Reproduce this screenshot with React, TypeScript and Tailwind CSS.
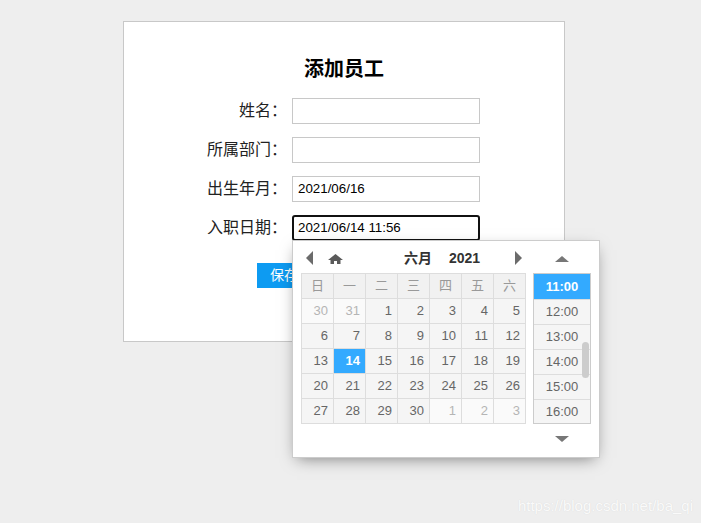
import React from "react";

const weekDays = ["日", "一", "二", "三", "四", "五", "六"];

const weeks: { d: number; other?: boolean }[][] = [
  [{ d: 30, other: true }, { d: 31, other: true }, { d: 1 }, { d: 2 }, { d: 3 }, { d: 4 }, { d: 5 }],
  [{ d: 6 }, { d: 7 }, { d: 8 }, { d: 9 }, { d: 10 }, { d: 11 }, { d: 12 }],
  [{ d: 13 }, { d: 14 }, { d: 15 }, { d: 16 }, { d: 17 }, { d: 18 }, { d: 19 }],
  [{ d: 20 }, { d: 21 }, { d: 22 }, { d: 23 }, { d: 24 }, { d: 25 }, { d: 26 }],
  [{ d: 27 }, { d: 28 }, { d: 29 }, { d: 30 }, { d: 1, other: true }, { d: 2, other: true }, { d: 3, other: true }],
];

const times = ["11:00", "12:00", "13:00", "14:00", "15:00", "16:00"];

function Field({ label, value, focused, children }: { label: string; value?: string; focused?: boolean; children?: React.ReactNode }) {
  return (
    <div className="flex items-center h-[26px]">
      <div className="w-[157px] text-right text-[16px] text-[#222] pr-[5px] leading-none">{label}</div>
      <div className="relative">
        <div
          className={
            focused
              ? "w-[188px] h-[26px] border-2 border-[#111] rounded-[3px] pl-[4px] flex items-center text-[13.33px] text-black"
              : "w-[188px] h-[26px] border border-[#c8c8c8] pl-[5px] flex items-center text-[13.33px] text-black"
          }
        >
          {value}
        </div>
        {children}
      </div>
    </div>
  );
}

function Picker() {
  return (
    <div className="absolute left-0 top-[25px] z-10 w-[308px] h-[218px] bg-white border border-[#ccc] shadow-[0_5px_15px_-5px_rgba(0,0,0,0.5)] flex pl-[8px]">
      <div className="w-[225px]">
        <div className="h-[32px] flex items-center relative pt-[2px]">
          <svg width="8" height="14" viewBox="0 0 8 14" className="ml-[5px]">
            <path d="M7 0 L0 7 L7 14 Z" fill="#6b6b6b" />
          </svg>
          <svg width="15" height="10" viewBox="0 0 15 10" className="ml-[14px] mt-[2px]">
            <path d="M7.5 0 L15 6 L12.5 6 L12.5 10 L9 10 L9 7 L6 7 L6 10 L2.5 10 L2.5 6 L0 6 Z" fill="#5a5a5a" />
          </svg>
          <div className="ml-[61px] flex items-center font-bold text-[14px] text-[#333]">
            <span>六月</span>
            <span className="ml-[17px]">2021</span>
          </div>
          <svg width="8" height="14" viewBox="0 0 8 14" className="ml-[35px]">
            <path d="M0 0 L7 7 L0 14 Z" fill="#6b6b6b" />
          </svg>
        </div>
        <table className="border-collapse text-[13px]">
          <thead>
            <tr>
              {weekDays.map((w) => (
                <th key={w} className="w-[32px] h-[25px] p-0 border border-[#ddd] bg-[#f1f1f1] text-[#999] font-normal text-[13px] text-center">
                  {w}
                </th>
              ))}
            </tr>
          </thead>
          <tbody>
            {weeks.map((row, i) => (
              <tr key={i}>
                {row.map((c, j) => {
                  const sel = !c.other && c.d === 14;
                  return (
                    <td
                      key={j}
                      className={
                        sel
                          ? "w-[32px] h-[25px] p-0 pr-[5px] border border-[#ddd] bg-[#33aaff] text-white font-bold text-right"
                          : c.other
                          ? "w-[32px] h-[25px] p-0 pr-[5px] border border-[#ddd] bg-[#fafafa] text-[#b5b5b5] text-right"
                          : "w-[32px] h-[25px] p-0 pr-[5px] border border-[#ddd] bg-[#f5f5f5] text-[#666] text-right"
                      }
                    >
                      {c.d}
                    </td>
                  );
                })}
              </tr>
            ))}
          </tbody>
        </table>
      </div>
      <div className="ml-[7px] w-[58px] flex flex-col items-center">
        <div className="h-[32px] flex items-center pt-[4px]">
          <svg width="14" height="6" viewBox="0 0 14 6">
            <path d="M7 0 L14 6 L0 6 Z" fill="#777" />
          </svg>
        </div>
        <div className="relative w-[58px] h-[151px] border border-[#ccc] overflow-hidden">
          {times.map((t, i) => (
            <div
              key={t}
              className={
                i === 0
                  ? "h-[25px] flex items-center justify-center bg-[#33aaff] text-white font-bold text-[13px]"
                  : "h-[25px] flex items-center justify-center bg-[#f5f5f5] text-[#666] text-[13px] border-t border-[#ddd]"
              }
            >
              {t}
            </div>
          ))}
          <div className="absolute right-[1px] top-[68px] w-[7px] h-[36px] rounded-[4px] bg-[#ccc]" />
        </div>
        <div className="h-[30px] flex items-center">
          <svg width="14" height="6" viewBox="0 0 14 6">
            <path d="M0 0 L14 0 L7 6 Z" fill="#777" />
          </svg>
        </div>
      </div>
    </div>
  );
}

export default function App() {
  return (
    <div
      className="relative w-[701px] h-[523px] bg-[#eee] pt-[21px] pl-[123px] overflow-hidden"
      style={{ fontFamily: '"Liberation Sans", "Noto Sans CJK SC", sans-serif' }}
    >
      <div className="w-[442px] h-[321px] bg-white border border-[#c8c8c8] pt-[34px]">
        <div className="h-[26px] leading-[26px] text-center text-[20px] font-bold text-black">添加员工</div>

        <div className="mt-[16px] flex flex-col gap-[13px] pl-[11px]">
          <Field label="姓名：" />
          <Field label="所属部门：" />
          <Field label="出生年月：" value="2021/06/16" />
          <Field label="入职日期：" value="2021/06/14 11:56" focused>
            <Picker />
          </Field>
        </div>

        <div className="mt-[22px] ml-[133px]">
          <div className="w-[80px] h-[25px] bg-[#0d9bf2] text-white text-[14px] flex items-center pl-[13px]">保存</div>
        </div>
      </div>

      <div className="absolute right-[8px] bottom-[6px] text-[15px] text-[#fafafa] [text-shadow:0_0_1px_#d4d4d4]">
        https://blog.csdn.net/ba_qi
      </div>
    </div>
  );
}
